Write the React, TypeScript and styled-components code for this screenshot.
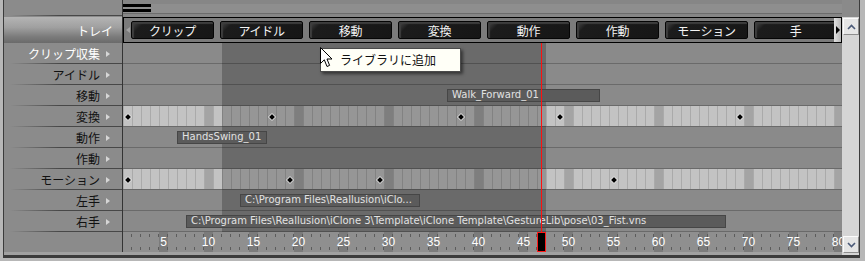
import React from "react";
import styled, { createGlobalStyle, css } from "styled-components";

const FRAME_W = 9;
const FRAMES = 80;
const RANGE_START = 12;
const RANGE_END = 47;
const CURRENT = 47;

type Clip = { name: string; start: number; length: number };
type Track = { label: string; bright?: boolean; keys?: number[]; clip?: Clip };

const tracks: Track[] = [
  { label: "クリップ収集", bright: true },
  { label: "アイドル" },
  { label: "移動", clip: { name: "Walk_Forward_01", start: 37, length: 17 } },
  { label: "変換", keys: [1, 17, 38, 49, 69] },
  { label: "動作", clip: { name: "HandsSwing_01", start: 7, length: 10 } },
  { label: "作動" },
  { label: "モーション", keys: [1, 19, 29, 55] },
  { label: "左手", clip: { name: "C:\\Program Files\\Reallusion\\iClo...", start: 14, length: 20 } },
  {
    label: "右手",
    clip: {
      name: "C:\\Program Files\\Reallusion\\iClone 3\\Template\\iClone Template\\GestureLib\\pose\\03_Fist.vns",
      start: 8,
      length: 60,
    },
  },
];

const trayItems = ["クリップ", "アイドル", "移動", "変換", "動作", "作動", "モーション", "手"];
const frames = Array.from({ length: FRAMES }, (_, i) => i + 1);

const GlobalStyle = createGlobalStyle`
  html, body {
    margin: 0;
    padding: 0;
    background: #b7b7b7;
  }
  body {
    font-family: "Noto Sans CJK JP", "Noto Sans", sans-serif;
  }
`;

const Page = styled.div`
  position: relative;
  width: 865px;
  height: 261px;
  padding-left: 3px;
  box-sizing: border-box;
  overflow: hidden;
`;

const Window = styled.div`
  display: flex;
  width: 857px;
  box-sizing: border-box;
  border-left: 1px solid #3b3b3b;
  border-bottom: 3px solid #3b3b3b;
  background: #8a8a8a;
`;

const Main = styled.div`
  display: flex;
  flex-direction: column;
  width: 838px;
`;

const Editor = styled.div`
  display: flex;
  height: 252px;
`;

const BottomStrip = styled.div`
  height: 3px;
  background: #a1a1a1;
`;

const separator = css`
  background-image: linear-gradient(90deg, rgba(70, 70, 70, 0) 6px, #474747 56px);
  background-repeat: no-repeat;
  background-position: left bottom;
  background-size: 100% 1px;
`;

const LabelColumn = styled.div`
  width: 119px;
  box-sizing: border-box;
  border-right: 1px solid #343434;
  display: flex;
  flex-direction: column;
  background-color: #8b8b8b;
`;

const LabelTop = styled.div`
  height: 17px;
  ${separator}
  background-position: 0 15px;
`;

const TrayLabel = styled.div`
  height: 26px;
  box-sizing: border-box;
  padding-right: 9px;
  display: flex;
  align-items: center;
  justify-content: flex-end;
  background: linear-gradient(180deg, #b4b4b4 0%, #a0a0a0 40%, #7c7c7c 75%, #6a6a6a 100%);
  color: #fff;
  font-size: 12px;
`;

const LabelRow = styled.div<{ $bright?: boolean }>`
  height: 21px;
  box-sizing: border-box;
  display: flex;
  align-items: center;
  justify-content: flex-end;
  gap: 6px;
  padding-right: 12px;
  font-size: 12px;
  color: ${(p) => (p.$bright ? "#ffffff" : "#111111")};
  ${separator}
`;

const Arrow = styled.span`
  width: 0;
  height: 0;
  border-left: 4px solid #d6d6d6;
  border-top: 3px solid transparent;
  border-bottom: 3px solid transparent;
`;

const TrackColumn = styled.div`
  width: 719px;
  display: flex;
  flex-direction: column;
`;

const TopStrip = styled.div`
  height: 17px;
  box-sizing: border-box;
  padding-top: 4px;
  background: #868686;
`;

const MiniScroll = styled.div`
  height: 9px;
  background: #8e8e8e;
  border-bottom: 1px solid #6c6c6c;
  display: flex;
`;

const MiniThumb = styled.div`
  width: 28px;
  height: 8px;
  box-sizing: border-box;
  border-top: 3px solid #000;
  border-bottom: 3px solid #000;
`;

const Tray = styled.div`
  height: 26px;
  box-sizing: border-box;
  border: 1px solid #000;
  display: flex;
  background: #7b7b7b;
`;

const TrayArrowLeft = styled.div`
  flex: none;
  width: 7px;
  display: flex;
  align-items: center;
  justify-content: center;

  &::before {
    content: "";
    border-right: 4px solid #a2a2a2;
    border-top: 3px solid transparent;
    border-bottom: 3px solid transparent;
  }
`;

const TrayArrowRight = styled.div`
  flex: none;
  width: 7px;
  display: flex;
  align-items: center;
  justify-content: center;
  background: linear-gradient(90deg, #e0e0e0, #b8b8b8);

  &::before {
    content: "";
    border-left: 4px solid #000;
    border-top: 4px solid transparent;
    border-bottom: 4px solid transparent;
  }
`;

const TrayStrip = styled.div`
  flex: 1;
  overflow: hidden;
  display: flex;
  align-items: center;
  gap: 6px;
`;

const TrayButton = styled.div`
  flex: none;
  width: 83px;
  height: 18px;
  box-sizing: border-box;
  border: 1px solid #050505;
  border-radius: 2px;
  background: linear-gradient(135deg, #4a4a4a 0px, #1c1c1c 9px, #161616 100%);
  box-shadow: inset 2px 2px 1px #3e3e3e;
  display: flex;
  align-items: center;
  justify-content: center;
  color: #f4f4f4;
  font-size: 12px;
  letter-spacing: -0.3px;
`;

const TrackBody = styled.div`
  position: relative;
  display: flex;
  flex-direction: column;
`;

const TrackRow = styled.div`
  position: relative;
  height: 21px;
  box-sizing: border-box;
  border-bottom: 1px solid #6a6a6a;
  display: flex;
  overflow: hidden;
  background: #8a8a8a;
`;

const KeyCell = styled.div<{ $major: boolean }>`
  flex: none;
  width: 9px;
  box-sizing: border-box;
  border-left: 1px solid #aaaaaa;
  background: ${(p) => (p.$major ? "#a4a4a4" : "#c3c3c3")};
  display: flex;
  align-items: center;
  justify-content: center;
  padding-top: 2px;
`;

const Diamond = styled.svg`
  position: relative;
  z-index: 2;
  margin-left: -1px;
  flex: none;
`;

const ClipBox = styled.div`
  position: absolute;
  top: 4px;
  height: 13px;
  box-sizing: border-box;
  border: 1px solid #464646;
  background: #5b5b5b;
  color: #e2e2e2;
  font-family: "DejaVu Sans", Verdana, sans-serif;
  font-size: 10px;
  line-height: 9px;
  padding: 0 0 0 4px;
  white-space: nowrap;
  overflow: hidden;
  z-index: 2;
`;

const RangeShade = styled.div`
  position: absolute;
  top: 0;
  bottom: 0;
  background: rgba(0, 0, 0, 0.23);
  z-index: 1;
  pointer-events: none;
`;

const PlayLine = styled.div`
  position: absolute;
  top: 0;
  bottom: 0;
  width: 1px;
  background: #ff1010;
  z-index: 3;
`;

const Ruler = styled.div`
  position: relative;
  height: 20px;
  display: flex;
  overflow: hidden;
  background: #8f8f8f;

  &::before,
  &::after {
    content: "";
    position: absolute;
    left: 0;
    right: 0;
    height: 3px;
    z-index: 1;
    background: repeating-linear-gradient(90deg, transparent 0 8px, #5c5c5c 8px 9px);
  }
  &::before {
    top: 2px;
  }
  &::after {
    bottom: 2px;
  }
`;

const RulerCell = styled.div<{ $mark: boolean; $current: boolean }>`
  flex: none;
  width: 9px;
  box-sizing: border-box;
  display: flex;
  align-items: center;
  justify-content: center;
  font-family: "Liberation Sans", Arial, sans-serif;
  font-size: 12px;
  color: #ffffff;
  background: ${(p) => (p.$mark ? "#7b7b7b" : "transparent")};
  ${(p) =>
    p.$current &&
    css`
      position: relative;
      z-index: 2;
      background: #000;
      border: 1px solid #ff1a1a;
    `}
`;

const ScrollColumn = styled.div`
  width: 18px;
  box-sizing: border-box;
  border-right: 1px solid #3b3b3b;
  display: flex;
  flex-direction: column;
`;

const ScrollCap = styled.div`
  height: 17px;
  background: #8a8a8a;
`;

const ScrollTrack = styled.div`
  flex: 1;
  background: #d5d5d5;
  display: flex;
  flex-direction: column;
  justify-content: space-between;
  padding: 1px 0 2px 1px;
`;

const ScrollButton = styled.div`
  width: 16px;
  height: 17px;
  box-sizing: border-box;
  border: 1px solid;
  border-color: #fbfbfb #8d8d8d #8d8d8d #fbfbfb;
  background: #e5e5e5;
  display: flex;
  align-items: center;
  justify-content: center;
`;

const Tooltip = styled.div`
  position: absolute;
  left: 320px;
  top: 48px;
  width: 141px;
  height: 24px;
  box-sizing: border-box;
  border: 1px solid #4a4a4a;
  background: #fffff7;
  box-shadow: 2px 2px 3px rgba(0, 0, 0, 0.5);
  padding-left: 19px;
  font-size: 12px;
  line-height: 22px;
  color: #111;
  z-index: 10;
`;

const Cursor = styled.svg`
  position: absolute;
  left: 320px;
  top: 47px;
  z-index: 11;
`;

const Chevron: React.FC<{ down?: boolean }> = ({ down }) => (
  <svg width="9" height="6" viewBox="0 0 9 6">
    <polyline
      points={down ? "1,1 4.5,4.5 8,1" : "1,5 4.5,1.5 8,5"}
      fill="none"
      stroke="#4b5a78"
      strokeWidth="1.6"
    />
  </svg>
);

const frameLeft = (f: number) => (f - 1) * FRAME_W;

export default function App() {
  return (
    <Page>
      <GlobalStyle />
      <Window>
        <Main>
          <Editor>
            <LabelColumn>
              <LabelTop />
              <TrayLabel>トレイ</TrayLabel>
              {tracks.map((t) => (
                <LabelRow key={t.label} $bright={t.bright}>
                  {t.label}
                  <Arrow />
                </LabelRow>
              ))}
            </LabelColumn>
            <TrackColumn>
              <TopStrip>
                <MiniScroll>
                  <MiniThumb />
                </MiniScroll>
              </TopStrip>
              <Tray>
                <TrayArrowLeft />
                <TrayStrip>
                  {trayItems.map((item) => (
                    <TrayButton key={item}>{item}</TrayButton>
                  ))}
                </TrayStrip>
                <TrayArrowRight />
              </Tray>
              <TrackBody>
                {tracks.map((t) => (
                  <TrackRow key={t.label}>
                    {t.keys &&
                      frames.map((f) => (
                        <KeyCell key={f} $major={f % 10 === 0}>
                          {t.keys!.includes(f) && (
                            <Diamond width="8" height="8" viewBox="0 0 8 8">
                              <polygon points="4,0.5 7.5,4 4,7.5 0.5,4" fill="#000" stroke="#fff" strokeWidth="1" />
                            </Diamond>
                          )}
                        </KeyCell>
                      ))}
                    {t.clip && (
                      <ClipBox
                        style={{
                          left: frameLeft(t.clip.start),
                          width: t.clip.length * FRAME_W,
                        }}
                      >
                        {t.clip.name}
                      </ClipBox>
                    )}
                  </TrackRow>
                ))}
                <RangeShade
                  style={{
                    left: frameLeft(RANGE_START),
                    width: (RANGE_END - RANGE_START + 1) * FRAME_W,
                  }}
                />
                <PlayLine style={{ left: frameLeft(CURRENT) + 4 }} />
              </TrackBody>
              <Ruler>
                {frames.map((f) => (
                  <RulerCell key={f} $mark={f % 5 === 0 && f !== CURRENT} $current={f === CURRENT}>
                    {f % 5 === 0 ? f : null}
                  </RulerCell>
                ))}
              </Ruler>
            </TrackColumn>
          </Editor>
          <BottomStrip />
        </Main>
        <ScrollColumn>
          <ScrollCap />
          <ScrollTrack>
            <ScrollButton>
              <Chevron />
            </ScrollButton>
            <ScrollButton>
              <Chevron down />
            </ScrollButton>
          </ScrollTrack>
        </ScrollColumn>
      </Window>
      <Tooltip>ライブラリに追加</Tooltip>
      <Cursor width="13" height="21" viewBox="0 0 13 21">
        <polygon
          points="0.5,0.5 0.5,16.5 4.3,12.8 7,19.5 9.6,18.4 7,12 12,12"
          fill="#fff"
          stroke="#000"
          strokeWidth="1"
          strokeLinejoin="miter"
        />
      </Cursor>
    </Page>
  );
}
